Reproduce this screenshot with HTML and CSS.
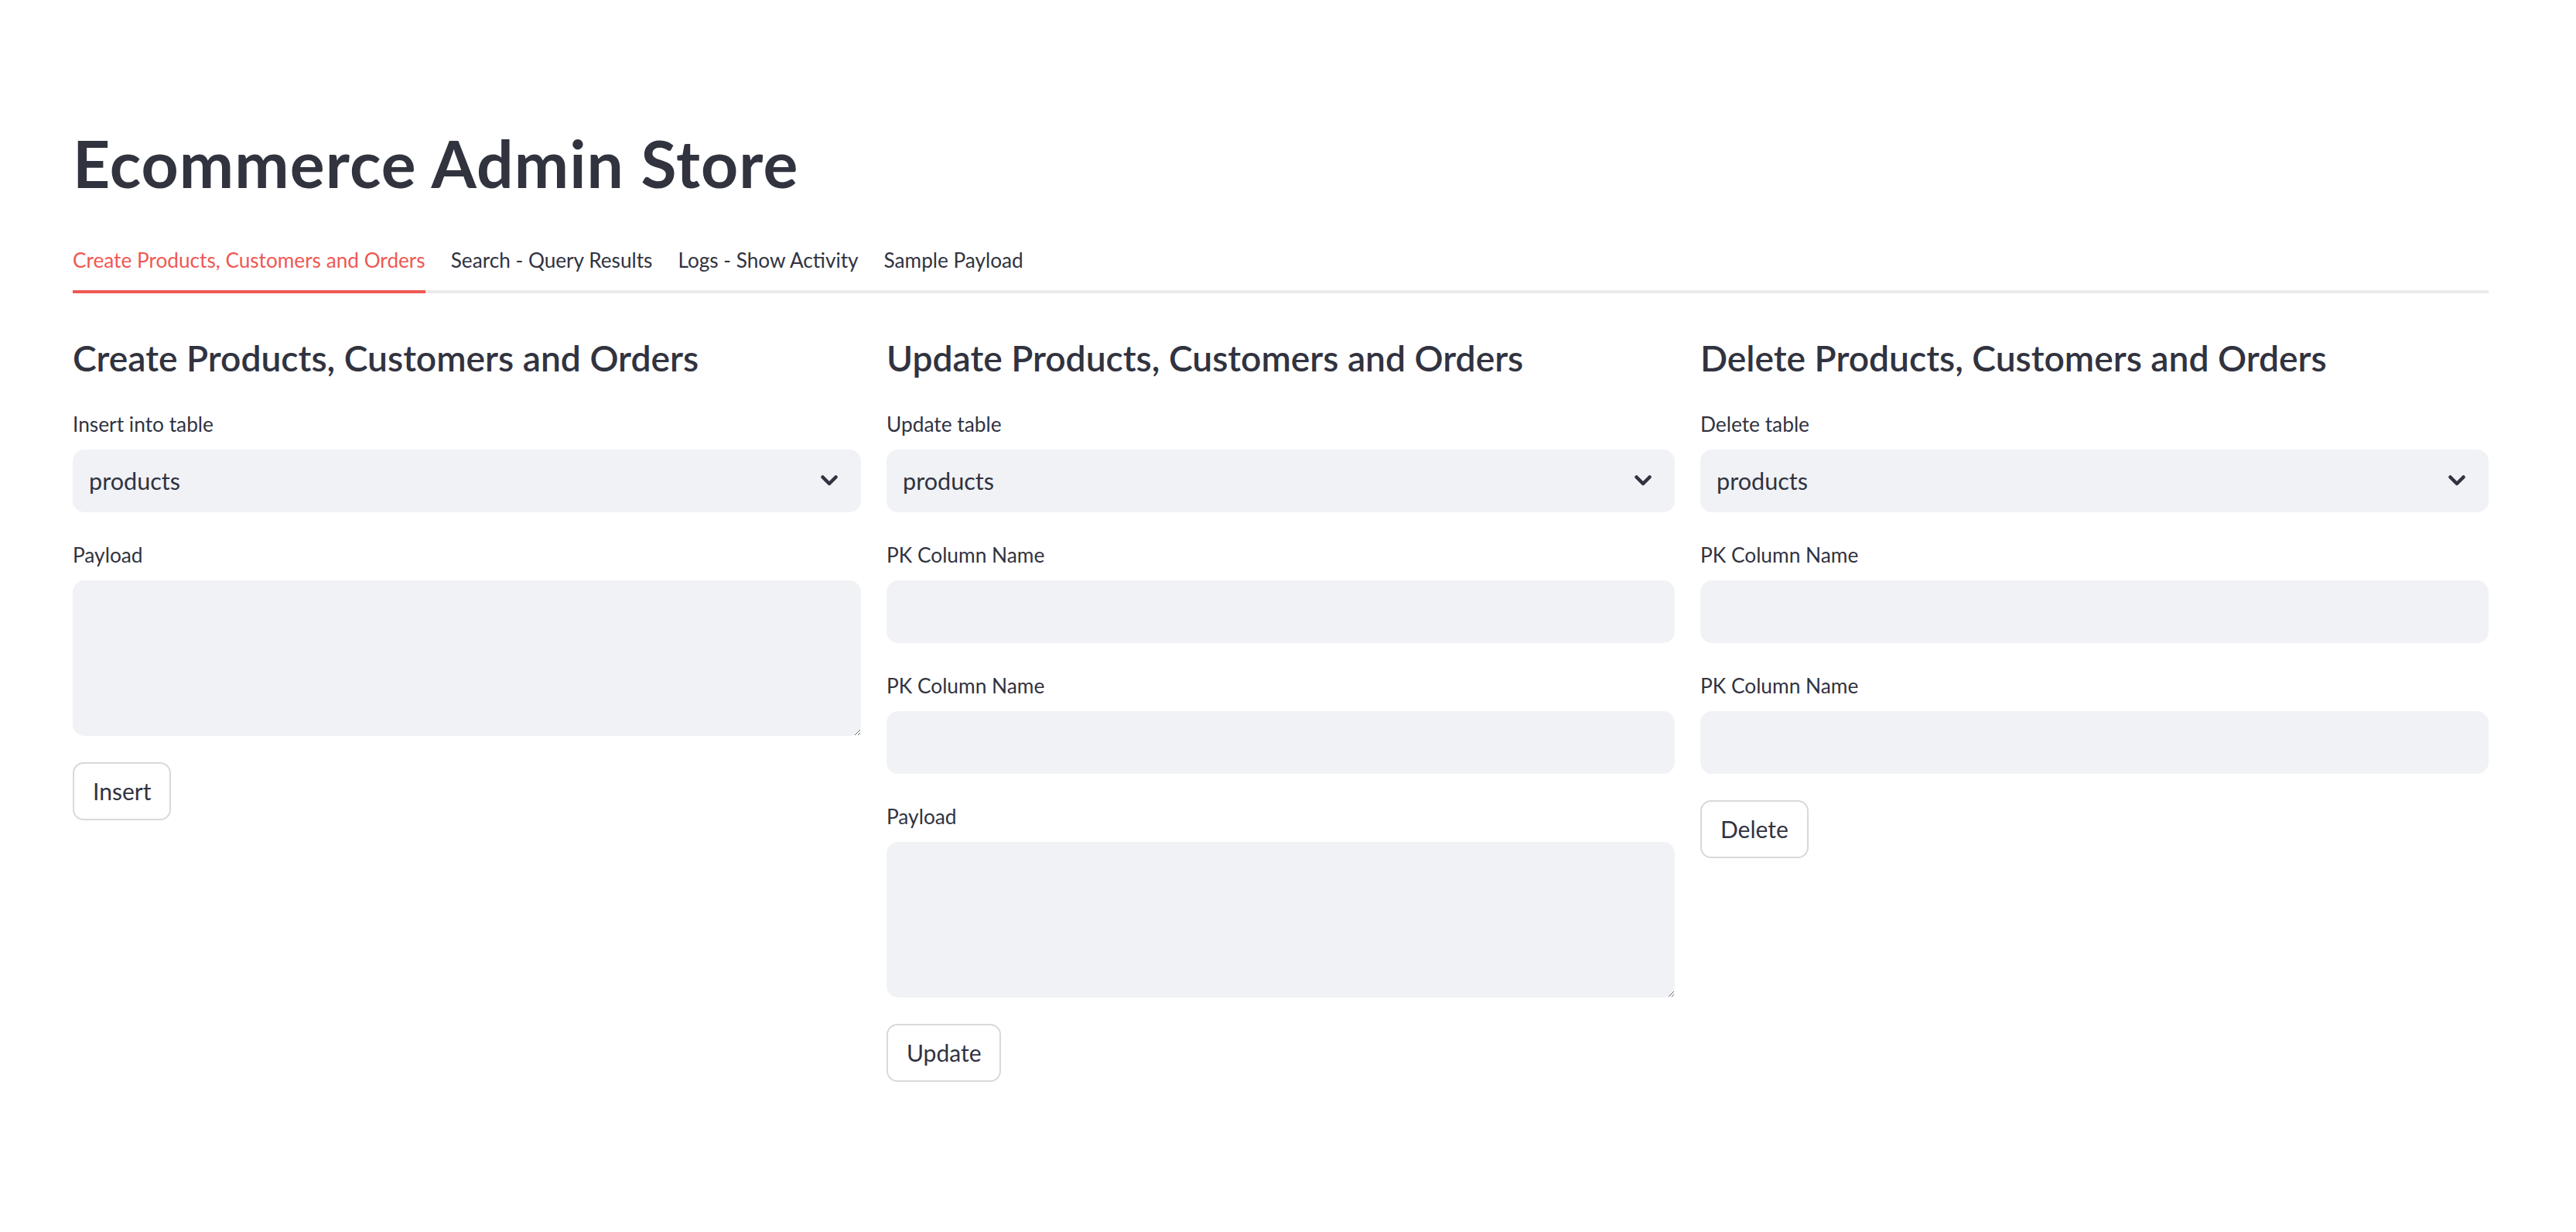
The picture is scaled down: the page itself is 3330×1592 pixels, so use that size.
FILE: index.html
```html
<!DOCTYPE html>
<html lang="en">
<head>
<meta charset="utf-8">
<title>Ecommerce Admin Store</title>
<link rel="stylesheet" href="styles.css">
</head>
<body>
<div class="page">
  <h1 class="title">Ecommerce Admin Store</h1>
  <div class="tabs">
    <div class="tab active">Create Products, Customers and Orders</div>
    <div class="tab">Search - Query Results</div>
    <div class="tab">Logs - Show Activity</div>
    <div class="tab">Sample Payload</div>
  </div>
  <div class="cols">
    <div class="col">
      <h3 class="heading">Create Products, Customers and Orders</h3>
      <div class="field">
        <div class="label">Insert into table</div>
        <div class="select"><span>products</span>
          <svg class="chev" viewBox="0 0 22 14" width="22" height="14"><polyline points="2.5,2.5 11,11 19.5,2.5" /></svg>
        </div>
      </div>
      <div class="field">
        <div class="label">Payload</div>
        <textarea class="textarea"></textarea>
      </div>
      <button class="btn">Insert</button>
    </div>
    <div class="col">
      <h3 class="heading">Update Products, Customers and Orders</h3>
      <div class="field">
        <div class="label">Update table</div>
        <div class="select"><span>products</span>
          <svg class="chev" viewBox="0 0 22 14" width="22" height="14"><polyline points="2.5,2.5 11,11 19.5,2.5" /></svg>
        </div>
      </div>
      <div class="field">
        <div class="label">PK Column Name</div>
        <input class="input" type="text">
      </div>
      <div class="field">
        <div class="label">PK Column Name</div>
        <input class="input" type="text">
      </div>
      <div class="field">
        <div class="label">Payload</div>
        <textarea class="textarea"></textarea>
      </div>
      <button class="btn">Update</button>
    </div>
    <div class="col">
      <h3 class="heading">Delete Products, Customers and Orders</h3>
      <div class="field">
        <div class="label">Delete table</div>
        <div class="select"><span>products</span>
          <svg class="chev" viewBox="0 0 22 14" width="22" height="14"><polyline points="2.5,2.5 11,11 19.5,2.5" /></svg>
        </div>
      </div>
      <div class="field">
        <div class="label">PK Column Name</div>
        <input class="input" type="text">
      </div>
      <div class="field">
        <div class="label">PK Column Name</div>
        <input class="input" type="text">
      </div>
      <button class="btn">Delete</button>
    </div>
  </div>
</div>
</body>
</html>
```
FILE: styles.css
```css
html, body {
  margin: 0;
  padding: 0;
  background: #ffffff;
}
body {
  font-family: Lato, "Noto Sans", sans-serif;
  color: #31333f;
}
.page {
  padding: 162px 113px 0 94px;
}
.title {
  margin: 0;
  font-weight: 700;
  font-size: 84px;
  line-height: 98px;
  letter-spacing: 1.1px;
  color: #31333f;
}
.tabs {
  margin-top: 61px;
  display: flex;
  gap: 33px;
  border-bottom: 4px solid #eaeaec;
}
.tab {
  font-size: 26.2px;
  line-height: 30px;
  padding-bottom: 24px;
  margin-bottom: -4px;
  border-bottom: 4px solid transparent;
  color: #31333f;
}
.tab.active {
  color: #ef5852;
  border-bottom-color: #ef5852;
}
.cols {
  margin-top: 55px;
  display: grid;
  grid-template-columns: repeat(3, 1fr);
  column-gap: 33px;
  align-items: start;
}
.col {
  display: flex;
  flex-direction: column;
  min-width: 0;
}
.heading {
  margin: 0 0 39.5px 0;
  font-weight: 600;
  font-size: 46.2px;
  line-height: 56px;
  color: #31333f;
  white-space: nowrap;
}
.field + .field {
  margin-top: 37px;
}
.label {
  font-size: 26.3px;
  line-height: 36px;
  margin-bottom: 15px;
  color: #31333f;
}
.select {
  height: 81px;
  box-sizing: border-box;
  background: #f0f2f6;
  border-radius: 15px;
  display: flex;
  align-items: center;
  justify-content: space-between;
  padding: 0 30px 0 21px;
  font-size: 30.6px;
  color: #31333f;
}
.chev {
  display: block;
  fill: none;
  stroke: #31333f;
  stroke-width: 4.5;
  stroke-linecap: round;
  stroke-linejoin: round;
}
.input, .textarea {
  display: block;
  width: 100%;
  box-sizing: border-box;
  border: none;
  outline: none;
  background: #f0f2f6;
  border-radius: 15px;
  margin: 0;
  font-family: inherit;
  font-size: 30px;
  color: #31333f;
}
.input {
  height: 81px;
  padding: 0 21px;
}
.textarea {
  height: 201px;
  padding: 20px 21px;
  resize: vertical;
}
.btn {
  align-self: flex-start;
  margin-top: 34px;
  height: 75px;
  padding: 0 24px;
  border: 2px solid #d9d9dc;
  border-radius: 14px;
  background: #ffffff;
  font-family: inherit;
  font-size: 30px;
  color: #31333f;
  cursor: pointer;
}
```
